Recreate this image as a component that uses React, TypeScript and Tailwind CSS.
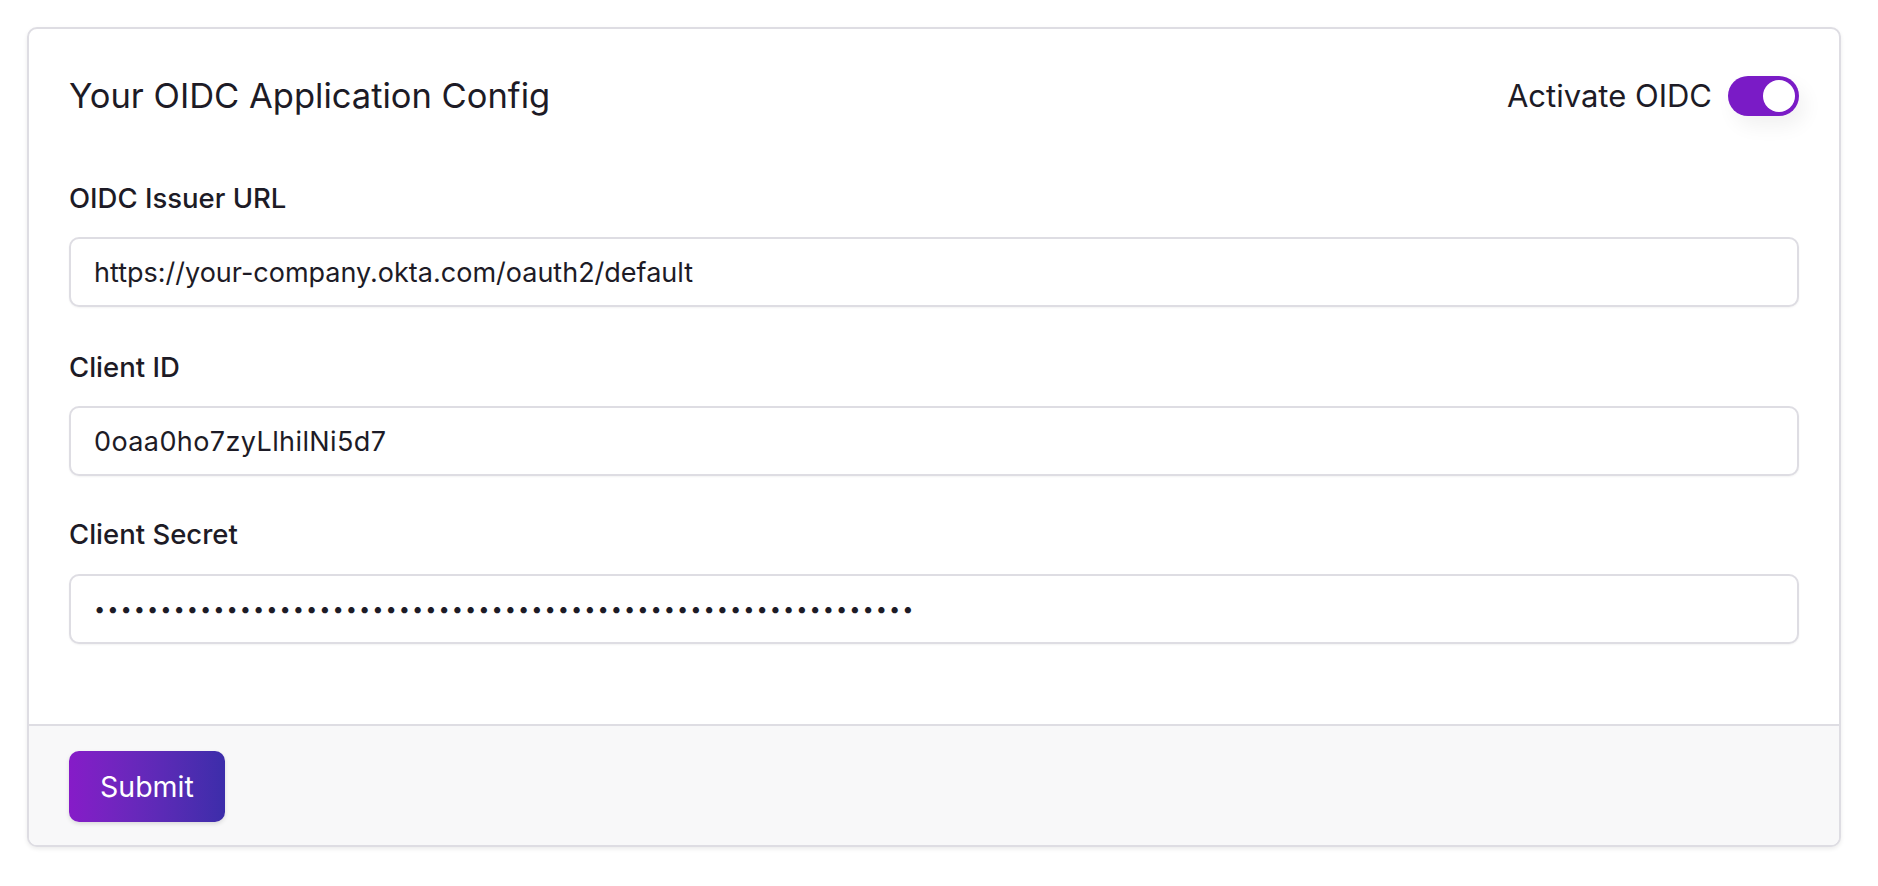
import React, { useState } from "react";

export default function App() {
  const [on, setOn] = useState(true);
  const font = { fontFamily: 'Inter, "Noto Sans", "Liberation Sans", sans-serif' };
  return (
    <div className="min-h-screen bg-white p-[27px] text-[#1d1b26]" style={font}>
      <div className="w-[1814px] overflow-hidden rounded-[10px] border-2 border-[#dedde3] bg-white shadow-[0_2px_4px_rgba(0,0,0,0.08)]">
        <div className="px-[40px] pt-[40px] pb-[80px]">
          <div className="flex h-[54px] items-center justify-between">
            <h1 className="text-[34.5px] font-normal leading-[54px]">Your OIDC Application Config</h1>
            <div className="flex items-center gap-[16px]">
              <span className="text-[31px] leading-[40px]">Activate OIDC</span>
              <button
                type="button"
                onClick={() => setOn(!on)}
                className={
                  "flex h-[40px] w-[71px] items-center rounded-full p-[4px] shadow-[6px_10px_20px_rgba(0,0,0,0.06)] " +
                  (on ? "justify-end bg-[#7a1bc6]" : "justify-start bg-[#d4d4d8]")
                }
              >
                <span className="block h-[32px] w-[32px] rounded-full bg-white" />
              </button>
            </div>
          </div>

          <div className="mt-[55px] flex flex-col">
            <label className="text-[27.5px] font-medium leading-[40px]">OIDC Issuer URL</label>
            <input
              className="mt-[19px] h-[70px] w-full rounded-[10px] border-2 border-[#dedde3] bg-white px-[23px] text-[27px] text-[#1d1b26] shadow-[0_1px_2px_rgba(0,0,0,0.05)] outline-none"
              defaultValue="https://your-company.okta.com/oauth2/default"
            />
            <label className="mt-[40px] text-[27.5px] font-medium leading-[40px]">Client ID</label>
            <input
              className="mt-[19px] h-[70px] w-full rounded-[10px] border-2 border-[#dedde3] bg-white px-[23px] text-[27px] tracking-[0.4px] text-[#1d1b26] shadow-[0_1px_2px_rgba(0,0,0,0.05)] outline-none"
              defaultValue="0oaa0ho7zyLlhilNi5d7"
            />
            <label className="mt-[38px] text-[27.5px] font-medium leading-[40px]">Client Secret</label>
            <input
              type="password"
              className="mt-[20px] h-[70px] w-full rounded-[10px] border-2 border-[#dedde3] bg-white px-[23px] text-[20px] tracking-[2px] text-[#1d1b26] shadow-[0_1px_2px_rgba(0,0,0,0.05)] outline-none"
              defaultValue={"x".repeat(62)}
            />
          </div>
        </div>
        <div className="border-t-2 border-[#dedde3] bg-[#f8f8f9] px-[40px] pt-[25px] pb-[23px]">
          <button
            type="button"
            className="h-[71px] rounded-[10px] bg-gradient-to-r from-[#861bc8] to-[#3c2daa] px-[31px] text-[28.5px] leading-[71px] text-white shadow-[0_2px_4px_rgba(0,0,0,0.12)]"
          >
            Submit
          </button>
        </div>
      </div>
    </div>
  );
}
